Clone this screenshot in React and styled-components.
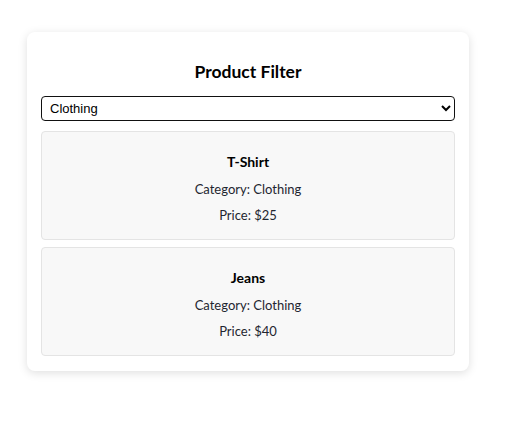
import React, { useState } from "react";
import styled, { createGlobalStyle } from "styled-components";

const products = [
  { id: 1, name: "T-Shirt", category: "Clothing", price: 25 },
  { id: 2, name: "Jeans", category: "Clothing", price: 40 },
  { id: 3, name: "Laptop", category: "Electronics", price: 999 },
  { id: 4, name: "Headphones", category: "Electronics", price: 120 },
];

const GlobalStyle = createGlobalStyle`
  html, body {
    min-height: 100%;
  }
  body {
    margin: 8px;
    background: #fff;
    font-family: Lato, "Open Sans", sans-serif;
  }
`;

const Page = styled.div`
  padding: 24px 0 40px 19px;
`;

const Card = styled.div`
  box-sizing: border-box;
  width: 442px;
  padding: 28px 14px 15px;
  background: #fff;
  border-radius: 8px;
  box-shadow: 0 2px 10px rgba(0, 0, 0, 0.13);
  display: flex;
  flex-direction: column;
`;

const Title = styled.h2`
  margin: 0 0 12px;
  font-size: 17.5px;
  line-height: 24px;
  font-weight: 700;
  text-align: center;
  color: #000;
`;

const Select = styled.select`
  box-sizing: border-box;
  height: 25px;
  width: 100%;
  padding: 0 4px;
  border: 1.5px solid #111;
  border-radius: 4px;
  background: #fff;
  font-family: "Liberation Sans", Arial, sans-serif;
  font-size: 13px;
  color: #000;
`;

const List = styled.div`
  margin-top: 10px;
  display: flex;
  flex-direction: column;
  gap: 7px;
`;

const Item = styled.div`
  box-sizing: border-box;
  padding: 20px 16px 16px;
  background: #f8f8f8;
  border: 1px solid #e4e4e4;
  border-radius: 4px;
  text-align: center;
`;

const ItemName = styled.h3`
  margin: 0;
  font-size: 14px;
  line-height: 19px;
  font-weight: 700;
  color: #000;
`;

const Line = styled.p`
  margin: 10px 0 0;
  font-size: 13px;
  line-height: 16px;
  color: #1f2630;
`;

export default function App() {
  const [category, setCategory] = useState("Clothing");
  const shown = products.filter((p) => category === "All" || p.category === category);

  return (
    <Page>
      <GlobalStyle />
      <Card>
        <Title>Product Filter</Title>
        <Select value={category} onChange={(e) => setCategory(e.target.value)}>
          <option value="All">All</option>
          <option value="Clothing">Clothing</option>
          <option value="Electronics">Electronics</option>
        </Select>
        <List>
          {shown.map((p) => (
            <Item key={p.id}>
              <ItemName>{p.name}</ItemName>
              <Line>Category: {p.category}</Line>
              <Line>Price: ${p.price}</Line>
            </Item>
          ))}
        </List>
      </Card>
    </Page>
  );
}
